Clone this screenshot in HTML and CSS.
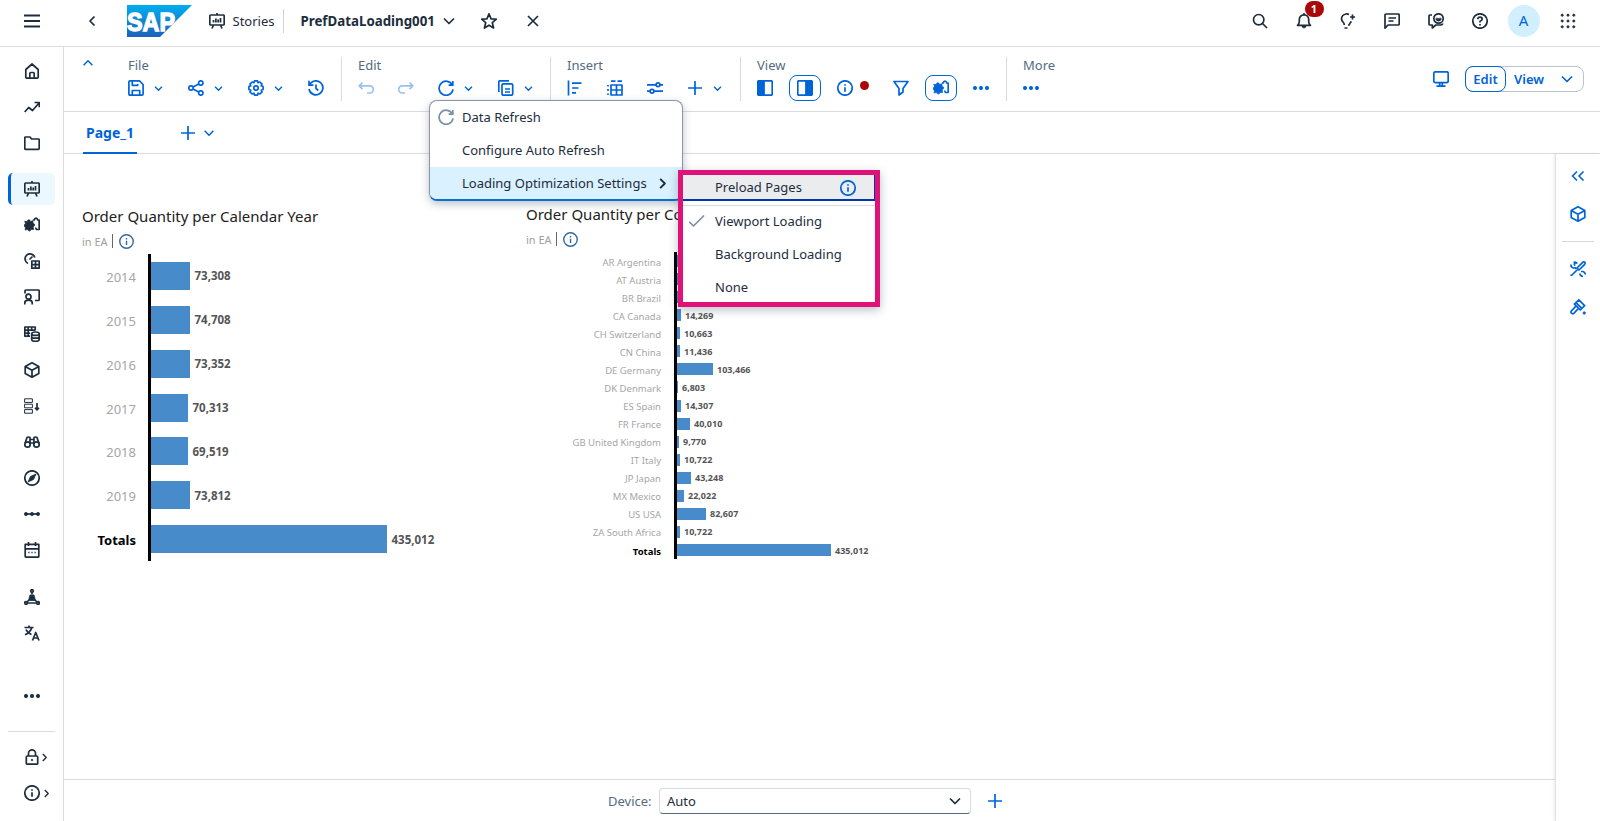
FILE: index.html
```
<!DOCTYPE html>
<html lang="en">

<head>
    <meta charset="UTF-8">
    <meta name="viewport" content="width=device-width, initial-scale=1.0">
    <title>PrefDataLoading001</title>
    <link rel="stylesheet" href="styles.css">
</head>

<body>
    <!-- icon set -->
    <svg class="sprite" xmlns="http://www.w3.org/2000/svg">
        <symbol id="menu" viewBox="0 0 16 16"><path d="M0 2.5h16M0 8h16M0 13.5h16"/></symbol>
        <symbol id="left" viewBox="0 0 16 16"><path d="M10.5 3.5L6 8l4.500 4.500"/></symbol>
        <symbol id="right" viewBox="0 0 16 16"><path d="M5.500 3l5 5-5 5"/></symbol>
        <symbol id="down" viewBox="0 0 16 16"><path d="M3 5.500l5 5 5-5"/></symbol>
        <symbol id="up" viewBox="0 0 16 16"><path d="M3 10.500l5-5 5 5"/></symbol>
        <symbol id="close" viewBox="0 0 16 16"><path d="M3 3l10 10M13 3L3 13"/></symbol>
        <symbol id="plus" viewBox="0 0 16 16"><path d="M8 1v14M1 8h14"/></symbol>
        <symbol id="star" viewBox="0 0 16 16"><path d="M8 .9l2.100 4.900 5.200.4-4 3.500 1.300 5.300L8 12.200 3.400 15l1.300-5.300-4-3.500 5.200-.4z"/></symbol>
        <symbol id="story" viewBox="0 0 16 16"><path d="M8 0v2M1.800 2h12.400q1 0 1 1v8q0 1-1 1H1.800q-1 0-1-1V3q0-1 1-1zM4.500 12L3 15.500M11.500 12l1.500 3.500M4.500 7v2.500M6.900 5.500v4M9.200 6.500v3M11.500 5v4.500"/></symbol>
        <symbol id="home" viewBox="0 0 16 16"><path d="M1.800 6.500L8 1l6.200 5.500V14q0 1.200-1.200 1.200H3q-1.200 0-1.200-1.200zM5.800 15V10.500q0-1 1-1h2.400q1 0 1 1V15"/></symbol>
        <symbol id="trend" viewBox="0 0 16 16"><path d="M.7 13l4-4.500 3.800 3L15 4M10.500 3.500h4.800v4.800"/></symbol>
        <symbol id="folder" viewBox="0 0 16 16"><path d="M.8 2.800q0-.8.8-.8H6l1.500 2h6.900q.8 0 .8.8V13.500q0 .8-.8.8H1.600q-.8 0-.8-.8z"/></symbol>
        <symbol id="puzzle" viewBox="0 0 16 16"><path class="solid" d="M.8 4.200l2.500.5q0-1.900 1.500-1.900t1.700 1.700l2.300-.7.3 2.600q1.600.2 1.500 1.600T9 9.500l.6 3-2.600-.2q-.3 1.700-1.700 1.700t-1.400-1.700L1.200 13l.3-2.800Q0 10 .1 8.600t1.500-1.500z"/><path d="M8.800 3h1.600q.1-1.800 1.600-1.800T13.600 3h1.600v9.500h-2.800q-.1-1.500-1.300-1.500"/></symbol>
        <symbol id="dash" viewBox="0 0 16 16"><path d="M4 10.500A5 5 0 1 1 10.800 4.500M5.500 6.500L8.500 3.500M7.800 8h7.400v7.200H7.800zM7.800 11.600h7.400M11.500 8v7.200M3 6.500v.2"/></symbol>
        <symbol id="person" viewBox="0 0 16 16"><path d="M1 4.500V2q0-1 1-1h12.200q1 0 1 1v8.500q0 1-1 1H11M.8 15.500v-1.800q0-2.500 3.700-2.500t3.700 2.500v1.800"/><circle cx="4.500" cy="7.700" r="2.500"/></symbol>
        <symbol id="tabledb" viewBox="0 0 16 16"><path d="M6 10.200H.8V1h10.400v3.500M.8 4.200h10.400M.8 7.200H6M4.200 1v9.200M7.700 1v4M7.700 8v5.500c0 2.400 7.500 2.400 7.500 0V8M7.700 10.700c0 2 7.500 2 7.500 0"/><ellipse cx="11.450" cy="7.700" rx="3.750" ry="1.700"/></symbol>
        <symbol id="cube" viewBox="0 0 16 16"><path d="M8 .8l6.800 3.700v7L8 15.200l-6.800-3.700v-7zM1.200 4.500L8 8.200l6.800-3.700M8 8.200v7"/></symbol>
        <symbol id="sortlist" viewBox="0 0 16 16"><path class="thin" d="M.6.8h7.800v3.600H.6zM.6 6.200h7.800v3.600H.6zM.6 11.600h7.800v3.600H.6z"/><path d="M13 5v7M11 9.700l2 2.200 2-2.200"/></symbol>
        <symbol id="binoc" viewBox="0 0 16 16"><circle cx="3.500" cy="10.500" r="2.700"/><circle cx="12.500" cy="10.500" r="2.700"/><path d="M1 9.500L3 3.500q1.500-1 3 0v6.500M15 9.500l-2-6q-1.500-1-3 0v6.500M6 5.500h4M6 9h4"/></symbol>
        <symbol id="compass" viewBox="0 0 16 16"><circle cx="8" cy="8" r="7.200"/><path class="solid" d="M12 4L9.500 9.500 4 12l2.500-5.500z"/></symbol>
        <symbol id="nodes" viewBox="0 0 16 16"><path d="M2 8h12"/><circle class="solid" cx="2" cy="8" r="1.600"/><circle class="solid" cx="8" cy="8" r="1.600"/><circle class="solid" cx="14" cy="8" r="1.600"/></symbol>
        <symbol id="calendar" viewBox="0 0 16 16"><path d="M1.200 2.300h13.600v11.900q0 1-1 1H2.200q-1 0-1-1zM1.200 6.800h13.600M4.500 0v4M11.500 0v4M4.300 10.500h1.200M7.400 10.500h1.200M10.500 10.500h1.200"/></symbol>
        <symbol id="network" viewBox="0 0 16 16"><circle cx="8" cy="2" r="1.300"/><circle cx="2" cy="14" r="1.300"/><circle cx="14" cy="14" r="1.300"/><path d="M8 3.500v2M5 11l-2 2M11 11l2 2M3.500 14h9"/><path class="solid" d="M6 6h4l1.500 5.500h-7z"/></symbol>
        <symbol id="translate" viewBox="0 0 16 16"><path d="M.5 2.500h9M5 .5v2M2 4.500q1.500 3.500 5.500 5M7.800 2.500Q6.500 7.500 1 9.800M8.500 15.500L11.700 7.500l3.300 8M9.500 13h4.500"/></symbol>
        <symbol id="dots" viewBox="0 0 16 16"><circle class="solid" cx="2" cy="8" r="1.700"/><circle class="solid" cx="8" cy="8" r="1.700"/><circle class="solid" cx="14" cy="8" r="1.700"/></symbol>
        <symbol id="lock" viewBox="0 0 16 16"><rect x="2.300" y="7" width="11.400" height="8.200" rx="1"/><path d="M4.500 7V4.300a3.500 3.500 0 0 1 7 0V7"/><circle class="solid" cx="8" cy="11" r=".8"/></symbol>
        <symbol id="info" viewBox="0 0 16 16"><circle cx="8" cy="8" r="7.200"/><path d="M8 7.200v4.600M8 4.200v1.600"/></symbol>
        <symbol id="help" viewBox="0 0 16 16"><circle cx="8" cy="8" r="7.200"/><path d="M5.800 6.300Q5.900 4.200 8 4.200t2.200 1.900Q10.200 7.600 8 8.300v1.200M8 11v1.500"/></symbol>
        <symbol id="search" viewBox="0 0 16 16"><circle cx="6.700" cy="6.700" r="5.200"/><path d="M10.500 10.500l4.500 4.500"/></symbol>
        <symbol id="bell" viewBox="0 0 16 16"><path d="M1.500 12.300q1.800-1.500 1.800-3.500V6.500a4.700 4.700 0 0 1 9.400 0v2.300q0 2 1.800 3.500zM7 1.200h2"/><path class="solid" d="M6 13h4q-.5 2-2 2t-2-2z"/></symbol>
        <symbol id="bulb" viewBox="0 0 16 16"><path d="M9 1.500Q7.500.8 6 1 2 1.700 1.500 5.500q0 2 1.500 3.500 1.200 1.200 1.300 3M11.500 8.500Q9.500 10 9.300 12H8M12.500 1.500v5M10 4h5M4.500 15h3"/></symbol>
        <symbol id="comment" viewBox="0 0 16 16"><path d="M1 15.200V2q0-1 1-1h12.200q1 0 1 1v9q0 1-1 1H4zM4.500 5h7.500M4.500 8h5"/></symbol>
        <symbol id="feedback" viewBox="0 0 16 16"><path d="M4 2H2Q1 2 1 3v8q0 1 1 1h2.300v3l3.500-3h5q2-.5 2-1.500"/><circle cx="10.500" cy="5.500" r="4.700"/><path d="M8.200 6q2.300 3.500 4.600 0zM8.800 4v.3M12.200 4v.3"/></symbol>
        <symbol id="grid" viewBox="0 0 16 16"><g class="solid"><circle cx="2.200" cy="2.200" r="1.100"/><circle cx="8" cy="2.200" r="1.100"/><circle cx="13.800" cy="2.200" r="1.100"/><circle cx="2.200" cy="8" r="1.100"/><circle cx="8" cy="8" r="1.100"/><circle cx="13.800" cy="8" r="1.100"/><circle cx="2.200" cy="13.800" r="1.100"/><circle cx="8" cy="13.800" r="1.100"/><circle cx="13.800" cy="13.800" r="1.100"/></g></symbol>
        <symbol id="save" viewBox="0 0 16 16"><path d="M.9 2q0-1.100 1.100-1.100h9.500l3.600 3.600V14q0 1.100-1.100 1.100H2Q.9 15.100.9 14zM4.300 1v4.300h5.400V4M4.300 15v-4.500h7.400V15"/></symbol>
        <symbol id="share" viewBox="0 0 16 16"><circle cx="3" cy="8" r="2.200"/><circle cx="12.800" cy="3" r="2.200"/><circle cx="12.800" cy="13" r="2.200"/><path d="M5 7l5.800-3M5 9l5.800 3"/></symbol>
        <symbol id="gear" viewBox="0 0 16 16"><path d="M6.500.9h3l.6 1.800 1.800-.7 2.100 2.100-.8 1.700 1.900.7v3l-1.900.7.8 1.700-2.100 2.100-1.800-.8-.6 1.900h-3l-.6-1.900-1.800.8L2 11.900l.8-1.700-1.900-.7v-3l1.900-.7L2 4.100 4.100 2l1.800.7z"/><circle cx="8" cy="8" r="2.200"/></symbol>
        <symbol id="history" viewBox="0 0 16 16"><path d="M1 .8v4.400h4.400M1.500 5A7 7 0 1 1 1 9M8 4.500V8.500l2.300 2"/></symbol>
        <symbol id="undo" viewBox="0 0 16 16"><path d="M4.500 2.500L1.200 5.800l3.300 3.300M1.500 5.800h10.200a3.400 3.400 0 0 1 0 7.200H9"/></symbol>
        <symbol id="redo" viewBox="0 0 16 16"><path d="M11.500 2.500l3.300 3.300-3.300 3.300M14.500 5.800H4.300a3.400 3.400 0 0 0 0 7.200H7"/></symbol>
        <symbol id="refresh" viewBox="0 0 16 16"><path d="M14.800 1v4.200h-4.200M14.300 5A7 7 0 1 0 15 9.300"/></symbol>
        <symbol id="copy" viewBox="0 0 16 16"><path d="M.8 12V2q0-1.200 1.200-1.200h9M5.200 3.800h8.300q1.200 0 1.200 1.200V14q0 1.200-1.200 1.200H5.200Q4 15.200 4 14V5q0-1.200 1.200-1.200zM7 9h5M7 12h5"/></symbol>
        <symbol id="align" viewBox="0 0 16 16"><path d="M1.500.5v15M5 3.200h9.500M5 8h6.500M5 12.800h4"/></symbol>
        <symbol id="table" viewBox="0 0 16 16"><path d="M4 5h11v10H4zM4 10h11M9.500 5v10M4 1.200h4.500M10.500 1.200H15M1 5v1.500M1 9v2M1 13.500V15"/></symbol>
        <symbol id="sliders" viewBox="0 0 16 16"><path d="M0 4.800h9M13 4.800h3M0 11.200h3M7 11.200h9"/><circle cx="11" cy="4.800" r="1.900"/><circle cx="5" cy="11.200" r="1.900"/></symbol>
        <symbol id="panelleft" viewBox="0 0 16 16"><rect x=".8" y=".8" width="14.400" height="14.400" rx="1"/><path class="solid" d="M1 1h6.500v14H1z"/></symbol>
        <symbol id="panelright" viewBox="0 0 16 16"><rect x=".8" y=".8" width="14.400" height="14.400" rx="1"/><path class="solid" d="M8.500 1H15v14H8.500z"/></symbol>
        <symbol id="filter" viewBox="0 0 16 16"><path d="M1 1.500h14L10 8.500V12l-4 3V8.500z"/></symbol>
        <symbol id="monitor" viewBox="0 0 16 16"><rect x=".8" y=".8" width="14.400" height="10.800" rx="1.500"/><path d="M6.700 12v2.500M9.300 12v2.500M3.500 15.200h9"/></symbol>
        <symbol id="dblleft" viewBox="0 0 16 16"><path d="M7 3.500L2.500 8 7 12.500M13.500 3.500L9 8l4.500 4.500"/></symbol>
        <symbol id="tools" viewBox="0 0 16 16"><path d="M15 1.200q-1.500-.7-2.800.6L7 7l2 2 5.200-5.200q1.300-1.300.8-2.600zM8 8l-6.500 6.500M1.200 15v-1.500M6.500.8L4.300 3l.5 1.700M1 3.500q-.3 3 2.500 3.500l1.700-.2 1 1M3.500 1.500Q6 .5 7.200 2.700M11 10.500h2q2.500 1 2 3M10 12.500v1q1.200 2 3 1.800"/></symbol>
        <symbol id="brush" viewBox="0 0 16 16"><path d="M8.800.9l5.800 5.800-4.300 4.300-5.800-5.800zM6.200 3.800l5.600 5.600M5.700 7.300L1.300 12q-.8 1.200.2 2.200t2.300.2l4.500-4.700"/><circle class="solid" cx="14.200" cy="14" r="1.200"/></symbol>
        <symbol id="check" viewBox="0 0 16 16"><path d="M.3 8.800L4.500 13 15 2.500"/></symbol>
    </svg>

    <!-- shell header -->
    <header class="shell">
        <svg class="icon menu-icon"><use href="#menu"/></svg>
        <svg class="icon back-icon"><use href="#left"/></svg>
        <svg class="logo" viewBox="0 0 65 32">
            <defs>
                <linearGradient id="sapblue" x1="0" y1="0" x2="0" y2="1">
                    <stop offset="0" stop-color="#00aeef"/>
                    <stop offset="1" stop-color="#1d61bc"/>
                </linearGradient>
            </defs>
            <path fill="url(#sapblue)" d="M0 0h65L33 32H0z"/>
            <text x="0" y="25.500" textLength="48" lengthAdjust="spacingAndGlyphs">SAP</text>
        </svg>
        <svg class="icon story-icon"><use href="#story"/></svg>
        <span class="area">Stories</span>
        <span class="title">PrefDataLoading001</span>
        <svg class="icon title-caret"><use href="#down"/></svg>
        <svg class="icon star-icon"><use href="#star"/></svg>
        <svg class="icon close-icon"><use href="#close"/></svg>
        <div class="shell-actions">
            <div><svg class="icon"><use href="#search"/></svg></div>
            <div class="bell"><svg class="icon"><use href="#bell"/></svg><span class="badge">1</span></div>
            <div><svg class="icon"><use href="#bulb"/></svg></div>
            <div><svg class="icon"><use href="#comment"/></svg></div>
            <div><svg class="icon"><use href="#feedback"/></svg></div>
            <div><svg class="icon"><use href="#help"/></svg></div>
            <div><span class="avatar">A</span></div>
            <div><svg class="icon"><use href="#grid"/></svg></div>
        </div>
    </header>

    <div class="page">
        <!-- side navigation -->
        <nav class="side">
            <a><svg class="icon"><use href="#home"/></svg></a>
            <a><svg class="icon"><use href="#trend"/></svg></a>
            <a><svg class="icon"><use href="#folder"/></svg></a>
            <a class="active"><svg class="icon"><use href="#story"/></svg></a>
            <a><svg class="icon"><use href="#puzzle"/></svg></a>
            <a><svg class="icon"><use href="#dash"/></svg></a>
            <a><svg class="icon"><use href="#person"/></svg></a>
            <a><svg class="icon"><use href="#tabledb"/></svg></a>
            <a><svg class="icon"><use href="#cube"/></svg></a>
            <a><svg class="icon"><use href="#sortlist"/></svg></a>
            <a><svg class="icon"><use href="#binoc"/></svg></a>
            <a><svg class="icon"><use href="#compass"/></svg></a>
            <a><svg class="icon"><use href="#nodes"/></svg></a>
            <a><svg class="icon"><use href="#calendar"/></svg></a>
            <a class="net"><svg class="icon"><use href="#network"/></svg></a>
            <a><svg class="icon"><use href="#translate"/></svg></a>
            <a class="overflow"><svg class="icon"><use href="#dots"/></svg></a>
            <hr>
            <a><svg class="icon"><use href="#lock"/></svg><svg class="icon more"><use href="#right"/></svg></a>
            <a><svg class="icon"><use href="#info"/></svg><svg class="icon more wide"><use href="#right"/></svg></a>
        </nav>

        <main>
            <!-- toolbar -->
            <div class="toolbar">
                <svg class="icon collapse"><use href="#up"/></svg>
                <div class="group file">
                    <label>File</label>
                    <div class="tools">
                        <button class="split"><svg class="icon"><use href="#save"/></svg><svg class="caret"><use href="#down"/></svg></button>
                        <button class="split"><svg class="icon"><use href="#share"/></svg><svg class="caret"><use href="#down"/></svg></button>
                        <button class="split"><svg class="icon"><use href="#gear"/></svg><svg class="caret"><use href="#down"/></svg></button>
                        <button><svg class="icon"><use href="#history"/></svg></button>
                    </div>
                </div>
                <div class="group edit">
                    <label>Edit</label>
                    <div class="tools">
                        <button class="off"><svg class="icon"><use href="#undo"/></svg></button>
                        <button class="off"><svg class="icon"><use href="#redo"/></svg></button>
                        <button class="split"><svg class="icon"><use href="#refresh"/></svg><svg class="caret"><use href="#down"/></svg></button>
                        <button class="split"><svg class="icon"><use href="#copy"/></svg><svg class="caret"><use href="#down"/></svg></button>
                    </div>
                    <!-- refresh menu -->
                    <div class="menu">
                        <div class="item"><svg class="icon"><use href="#refresh"/></svg>Data Refresh</div>
                        <div class="item">Configure Auto Refresh</div>
                        <div class="item selected">Loading Optimization Settings<svg class="icon arrow"><use href="#right"/></svg></div>
                    </div>
                    <div class="menu submenu">
                        <div class="item head">Preload Pages<svg class="icon hint"><use href="#info"/></svg></div>
                        <div class="item"><svg class="icon"><use href="#check"/></svg>Viewport Loading</div>
                        <div class="item">Background Loading</div>
                        <div class="item">None</div>
                    </div>
                </div>
                <div class="group insert">
                    <label>Insert</label>
                    <div class="tools">
                        <button><svg class="icon"><use href="#align"/></svg></button>
                        <button><svg class="icon"><use href="#table"/></svg></button>
                        <button><svg class="icon"><use href="#sliders"/></svg></button>
                        <button class="split"><svg class="icon"><use href="#plus"/></svg><svg class="caret"><use href="#down"/></svg></button>
                    </div>
                </div>
                <div class="group view">
                    <label>View</label>
                    <div class="tools">
                        <button><svg class="icon"><use href="#panelleft"/></svg></button>
                        <button class="pressed"><svg class="icon"><use href="#panelright"/></svg></button>
                        <button class="status"><svg class="icon"><use href="#info"/></svg><i></i></button>
                        <button><svg class="icon"><use href="#filter"/></svg></button>
                        <button class="pressed"><svg class="icon"><use href="#puzzle"/></svg></button>
                        <button><svg class="icon"><use href="#dots"/></svg></button>
                    </div>
                </div>
                <div class="group">
                    <label>More</label>
                    <div class="tools">
                        <button><svg class="icon"><use href="#dots"/></svg></button>
                    </div>
                </div>
                <div class="mode">
                    <svg class="icon"><use href="#monitor"/></svg>
                    <div class="segmented">
                        <span class="on">Edit</span>
                        <span class="view-mode">View</span>
                        <svg class="icon"><use href="#down"/></svg>
                    </div>
                </div>
            </div>

            <!-- page tabs -->
            <div class="tabs">
                <span class="tab">Page_1</span>
                <svg class="icon"><use href="#plus"/></svg>
                <svg class="icon tab-caret"><use href="#down"/></svg>
            </div>

            <div class="work">
                <div class="left">
                    <div class="canvas">
                        <section class="widget years">
                            <h2>Order Quantity per Calendar Year</h2>
                            <p><span>in EA</span><svg class="icon"><use href="#info"/></svg></p>
                            <div class="chart">
                                <div class="row"><b>2014</b><i style="width: 39px"></i><em>73,308</em></div>
                                <div class="row"><b>2015</b><i style="width: 39px"></i><em>74,708</em></div>
                                <div class="row"><b>2016</b><i style="width: 39px"></i><em>73,352</em></div>
                                <div class="row"><b>2017</b><i style="width: 37px"></i><em>70,313</em></div>
                                <div class="row"><b>2018</b><i style="width: 37px"></i><em>69,519</em></div>
                                <div class="row"><b>2019</b><i style="width: 39px"></i><em>73,812</em></div>
                                <div class="row total"><b>Totals</b><i style="width: 236px"></i><em>435,012</em></div>
                            </div>
                        </section>
                        <section class="widget countries">
                            <h2>Order Quantity per Country</h2>
                            <p><span>in EA</span><svg class="icon"><use href="#info"/></svg></p>
                            <div class="chart">
                                <div class="row"><b>AR Argentina</b><i style="width: 4px"></i></div>
                                <div class="row"><b>AT Austria</b><i style="width: 4px"></i></div>
                                <div class="row"><b>BR Brazil</b><i style="width: 4px"></i></div>
                                <div class="row"><b>CA Canada</b><i style="width: 4px"></i><em>14,269</em></div>
                                <div class="row"><b>CH Switzerland</b><i style="width: 3px"></i><em>10,663</em></div>
                                <div class="row"><b>CN China</b><i style="width: 3px"></i><em>11,436</em></div>
                                <div class="row"><b>DE Germany</b><i style="width: 36px"></i><em>103,466</em></div>
                                <div class="row"><b>DK Denmark</b><i style="width: 1px"></i><em>6,803</em></div>
                                <div class="row"><b>ES Spain</b><i style="width: 4px"></i><em>14,307</em></div>
                                <div class="row"><b>FR France</b><i style="width: 13px"></i><em>40,010</em></div>
                                <div class="row"><b>GB United Kingdom</b><i style="width: 2px"></i><em>9,770</em></div>
                                <div class="row"><b>IT Italy</b><i style="width: 3px"></i><em>10,722</em></div>
                                <div class="row"><b>JP Japan</b><i style="width: 14px"></i><em>43,248</em></div>
                                <div class="row"><b>MX Mexico</b><i style="width: 7px"></i><em>22,022</em></div>
                                <div class="row"><b>US USA</b><i style="width: 29px"></i><em>82,607</em></div>
                                <div class="row"><b>ZA South Africa</b><i style="width: 3px"></i><em>10,722</em></div>
                                <div class="row total"><b>Totals</b><i style="width: 154px"></i><em>435,012</em></div>
                            </div>
                        </section>
                    </div>
                    <footer>
                        <label>Device:</label>
                        <div class="select">Auto<svg class="icon"><use href="#down"/></svg></div>
                        <svg class="icon"><use href="#plus"/></svg>
                    </footer>
                </div>
                <aside>
                    <svg class="icon"><use href="#dblleft"/></svg>
                    <svg class="icon"><use href="#cube"/></svg>
                    <hr>
                    <svg class="icon"><use href="#tools"/></svg>
                    <svg class="icon"><use href="#brush"/></svg>
                </aside>
            </div>
        </main>
    </div>
</body>

</html>
```
FILE: styles.css
```
* {
    box-sizing: border-box;
}

body {
    margin: 0;
    height: 821px;
    overflow: hidden;
    display: flex;
    flex-direction: column;
    font-family: "Noto Sans", "Open Sans", sans-serif;
    font-size: 13px;
    color: #1d2d3e;
    background-color: white;
}

.sprite {
    display: none;
}

.icon {
    width: 16px;
    height: 16px;
    flex: none;
    fill: none;
    stroke: currentColor;
    stroke-width: 1.7;
    stroke-linejoin: round;
    overflow: visible;
}

.solid {
    fill: currentColor;
    stroke-width: 0.8;
}

.thin {
    stroke-width: 1;
}

/* header */
.shell {
    height: 47px;
    flex: none;
    display: flex;
    align-items: center;
    padding: 0 10.5px 5px 23.5px;
    border-bottom: 1px solid #dcdfe2;
}

.menu-icon {
    stroke-width: 2;
}

.back-icon {
    margin-left: 44px;
}

.logo {
    width: 65px;
    height: 32px;
    margin-left: 27px;
}

.logo text {
    font-family: "Liberation Sans", Arial, sans-serif;
    font-size: 26px;
    font-weight: bold;
    fill: white;
    stroke: white;
    stroke-width: 1.3;
}

.story-icon {
    margin-left: 17px;
}

.area {
    width: 51px;
    height: 24px;
    line-height: 24px;
    margin-left: 8px;
    border-right: 1px solid #d0d4d8;
}

.title {
    width: 134px;
    margin-left: 17px;
    font-weight: bold;
    font-size: 13.3px;
    white-space: nowrap;
}

.title-caret {
    margin-left: 6px;
}

.star-icon {
    margin-left: 24px;
}

.close-icon {
    margin-left: 28px;
}

.shell-actions {
    display: flex;
    margin-left: auto;
}

.shell-actions div {
    width: 44px;
    display: flex;
    justify-content: center;
    align-items: center;
    position: relative;
}

.badge {
    position: absolute;
    left: 23px;
    top: -4px;
    width: 19px;
    height: 16px;
    border-radius: 8px;
    background-color: #aa0808;
    color: white;
    font-size: 11px;
    font-weight: bold;
    line-height: 16px;
    text-align: center;
}

.avatar {
    width: 32px;
    height: 32px;
    border-radius: 50%;
    background-color: #d1efff;
    color: #0064d9;
    font-size: 15px;
    line-height: 31px;
    text-align: center;
}

.page {
    flex: 1;
    display: flex;
    min-height: 0;
}

/* side navigation */
.side {
    width: 64px;
    flex: none;
    padding: 6px 8px 0;
    border-right: 1px solid #d9dbdd;
}

.side a {
    height: 32px;
    margin-bottom: 4.100px;
    padding-left: 15.500px;
    display: flex;
    align-items: center;
    position: relative;
    top: 2px;
}

.side a.active {
    margin-top: 14px;
    padding-left: 12.500px;
    border-left: 3px solid #0064d9;
    border-radius: 5px;
    background-color: #ebf8ff;
}

.side a.net {
    margin-top: 15px;
}

.side a.overflow {
    margin-top: 31px;
}

.side hr {
    height: 1px;
    margin: 21px 0 7px;
    border: none;
    background-color: #d9dbdd;
}

.side .more {
    width: 11px;
    height: 11px;
    stroke-width: 2;
    margin-left: -1px;
}

.side .wide {
    margin-left: 1px;
}

main {
    flex: 1;
    display: flex;
    flex-direction: column;
    min-width: 0;
}

/* toolbar */
.toolbar {
    height: 65px;
    flex: none;
    display: flex;
    padding-top: 10px;
    border-bottom: 1px solid #d9dbdd;
    position: relative;
    z-index: 2;
}

.collapse {
    width: 14px;
    height: 14px;
    margin: -1px 10px 0 17px;
    color: #0064d9;
}

.group {
    height: 44px;
    padding-left: 16px;
    border-left: 1px solid #d9d9d9;
    position: relative;
}

.group label {
    display: block;
    height: 17px;
    line-height: 17px;
    color: #556b82;
}

.file {
    width: 236px;
    padding-left: 23px;
    border: none;
}

.edit {
    width: 209px;
}

.insert {
    width: 190px;
}

.view {
    width: 266px;
}

.tools {
    display: flex;
    height: 28px;
}

.tools button {
    width: 40px;
    flex: none;
    padding: 0;
    border: none;
    background: none;
    display: flex;
    align-items: center;
    color: #0064d9;
}

.tools .split {
    width: 60px;
}

.tools .status {
    width: 56px;
}

.tools .status i {
    width: 9px;
    height: 9px;
    margin: -6px 0 0 7px;
    border-radius: 50%;
    background-color: #aa0808;
}

.tools .off {
    color: #99c1f0;
}

.caret {
    width: 11px;
    height: 11px;
    margin-left: 9px;
    fill: none;
    stroke: currentColor;
    stroke-width: 2;
}

.tools .pressed {
    width: 32px;
    height: 26px;
    margin: 1px 16px 0 -8px;
    justify-content: center;
    border: 1px solid #0064d9;
    border-radius: 8px;
}

.mode {
    margin: -1px 16px 0 auto;
    height: 46px;
    display: flex;
    align-items: center;
    color: #0064d9;
    font-weight: 600;
}

.segmented {
    width: 119px;
    height: 26px;
    margin-left: 16px;
    display: flex;
    align-items: center;
    border: 1px solid #bcc3ca;
    border-radius: 8px;
}

.segmented .on {
    width: 41px;
    height: 26px;
    margin-left: -1px;
    line-height: 24px;
    text-align: center;
    border: 1px solid #0064d9;
    border-radius: 8px;
}

.segmented .view-mode {
    width: 45px;
    margin-left: 8px;
}

/* menus */
.menu {
    position: absolute;
    left: 87px;
    top: 43px;
    z-index: 3;
    width: 254px;
    height: 101px;
    background-color: white;
    border: 1px solid #8896a5;
    border-bottom: 2px solid #0a6ed1;
    border-radius: 8px;
    overflow: hidden;
    box-shadow: 0 3px 9px rgba(34, 53, 72, 0.3);
}

.item {
    height: 33px;
    padding-left: 32px;
    line-height: 33px;
    position: relative;
    white-space: nowrap;
}

.item .icon {
    position: absolute;
    left: 8px;
    top: 8px;
    color: #7a90a8;
}

.selected {
    background-color: #daf1ff;
}

.item .arrow {
    left: auto;
    right: 12px;
    top: 9px;
    width: 15px;
    height: 15px;
    color: #1d2d3e;
    stroke-width: 2;
}

.submenu {
    left: 336px;
    top: 113px;
    width: 202px;
    height: 137px;
    border: 5px solid #e01278;
    border-radius: 0;
}

.submenu .icon {
    left: 6px;
}

.head {
    height: 26px;
    line-height: 25px;
    margin-bottom: 4px;
    background-color: #ebecee;
    border: 1px solid #0037b0;
    border-width: 0 1px 2px 0;
    box-shadow: 0 4px 0 white, 0 5px 0 #d9d9d9;
}

.item .hint {
    left: 157px;
    top: 5px;
    color: #0064d9;
}

/* tabs */
.tabs {
    height: 42px;
    flex: none;
    display: flex;
    align-items: center;
    padding-left: 19px;
    border-bottom: 1px solid #d9dbdd;
    color: #0064d9;
}

.tab {
    width: 54px;
    height: 41px;
    margin: 1px 43px 0 0;
    padding-left: 3px;
    line-height: 40px;
    font-size: 14px;
    font-weight: bold;
    border-bottom: 2px solid #0064d9;
}

.tab-caret {
    width: 14px;
    height: 14px;
    margin-left: 6px;
}

.work {
    flex: 1;
    display: flex;
    min-height: 0;
}

.left {
    flex: 1;
    display: flex;
    flex-direction: column;
}

.canvas {
    flex: 1;
    display: flex;
    padding: 50px 0 0 18px;
}

/* charts */
.widget {
    width: 444px;
}

.widget h2 {
    margin: 0;
    font-size: 15px;
    font-weight: normal;
    line-height: 24px;
    color: #222;
}

.widget p {
    height: 20px;
    margin: 3px 0;
    display: flex;
    align-items: center;
    font-size: 11px;
    color: #a0a0a0;
}

.widget p span {
    width: 31px;
    height: 14px;
    line-height: 15px;
    border-right: 1px solid #666;
}

.widget p .icon {
    width: 15px;
    height: 15px;
    margin-left: 6px;
    stroke-width: 1.5;
    color: #346a9e;
}

.chart {
    height: 307px;
    display: flex;
    flex-direction: column;
}

.row {
    flex: 1;
    display: flex;
    align-items: center;
}

.row b {
    width: 54px;
    margin-right: 12px;
    text-align: right;
    font-weight: normal;
    color: #a6a6a6;
    white-space: nowrap;
    position: relative;
    top: 1px;
}

.row i {
    height: 28px;
    background-color: #478bca;
}

.row::before {
    content: "";
    order: 1;
    align-self: stretch;
    width: 3px;
    background-color: black;
}

.row i,
.row em {
    order: 2;
}

.row em {
    margin-left: 4.500px;
    font-style: normal;
    font-weight: bold;
    font-size: 11.5px;
    color: #555;
}

.total b {
    color: black;
    font-weight: bold;
}

.countries {
    margin-top: -2px;
}

.countries .row b {
    width: 135px;
    margin-right: 13px;
    font-size: 9.5px;
}

.countries .row i {
    height: 12px;
}

.countries .row em {
    margin-left: 4px;
    font-size: 9px;
}

/* device bar */
footer {
    height: 42px;
    flex: none;
    display: flex;
    align-items: center;
    padding: 1px 0 0 544px;
    border-top: 1px solid #d9dbdd;
}

footer label {
    width: 51px;
    color: #556b82;
}

.select {
    width: 312px;
    height: 26px;
    margin-right: 16px;
    padding: 0 7px;
    display: flex;
    align-items: center;
    justify-content: space-between;
    border: 1px solid #d5dadf;
    border-bottom-color: #556b82;
    border-radius: 4px;
}

footer > .icon {
    color: #0064d9;
}

aside {
    width: 45px;
    flex: none;
    display: flex;
    flex-direction: column;
    align-items: center;
    gap: 22px;
    padding-top: 14px;
    border-left: 1px solid #e0e3e5;
    box-shadow: -1px 0 3px rgba(0, 0, 0, 0.08);
    color: #0064d9;
}

aside hr {
    width: 32px;
    height: 1px;
    margin: -3px 0;
    border: none;
    background-color: #d9d9d9;
}
```
